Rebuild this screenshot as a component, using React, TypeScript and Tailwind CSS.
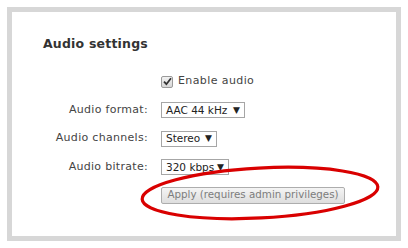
import React from 'react'

const font = { fontFamily: '"DejaVu Sans", Verdana, sans-serif' }

function Select({ value, width }: { value: string; width: string }) {
  return (
    <div
      className={`flex items-center justify-between h-[16px] ${width} border border-[#a6a6a6] bg-white pl-[4px] pr-[4px] text-[10.5px] leading-none text-[#222] whitespace-nowrap`}
    >
      <span>{value}</span>
      <span className="text-[9px]">▼</span>
    </div>
  )
}

function Row({ label, children, h }: { label?: string; children: React.ReactNode; h: string }) {
  return (
    <div className={`flex items-center ${h}`}>
      <div className="w-[136px] text-right text-[11px] text-[#444] tracking-[0.3px] whitespace-nowrap">{label}</div>
      <div className="ml-[13px]">{children}</div>
    </div>
  )
}

export default function App() {
  return (
    <div className="w-[408px] h-[248px] bg-white p-[7px]" style={font}>
      <div className="relative h-[234px] w-[394px] border-[5px] border-[#d7d7d7] bg-white">
        {/* heading */}
        <div className="pl-[31px] pt-[23px] h-[55px] text-[12.5px] font-bold text-[#333] tracking-[0.2px]">
          Audio settings
        </div>

        <div className="flex flex-col">
          <Row h="h-[29px]">
            <div className="flex items-center">
              <span className="flex h-[12px] w-[12px] items-center justify-center rounded-[2px] border border-[#9a9a9a] bg-gradient-to-b from-[#f2f2f2] to-[#d6d6d6]">
                <svg width="9" height="9" viewBox="0 0 9 9">
                  <path d="M1 4.6 L3.4 7.2 L8 1.3" fill="none" stroke="#333" strokeWidth="1.8" />
                </svg>
              </span>
              <span className="ml-[5px] text-[11px] text-[#444] tracking-[0.4px]">Enable audio</span>
            </div>
          </Row>
          <Row label="Audio format:" h="h-[28px]">
            <Select value="AAC 44 kHz" width="w-[84px]" />
          </Row>
          <Row label="Audio channels:" h="h-[29px]">
            <Select value="Stereo" width="w-[56px]" />
          </Row>
          <Row label="Audio bitrate:" h="h-[28px]">
            <Select value="320 kbps" width="w-[68px]" />
          </Row>
          <Row h="h-[28px]">
            <div className="flex h-[17px] w-[184px] items-center justify-center rounded-[2px] border border-[#adadad] bg-gradient-to-b from-[#f4f4f4] to-[#dedede] text-[10.3px] text-[#7c7c7c] whitespace-nowrap">
              Apply (requires admin privileges)
            </div>
          </Row>
        </div>

        {/* red annotation ellipse */}
        <svg
          className="absolute left-[126px] top-[148px]"
          width="250"
          height="66"
          viewBox="0 0 250 66"
        >
          <ellipse
            cx="122"
            cy="33"
            rx="118"
            ry="25"
            transform="rotate(-3 122 33)"
            fill="none"
            stroke="#d90000"
            strokeWidth="3.2"
          />
        </svg>
      </div>
    </div>
  )
}
